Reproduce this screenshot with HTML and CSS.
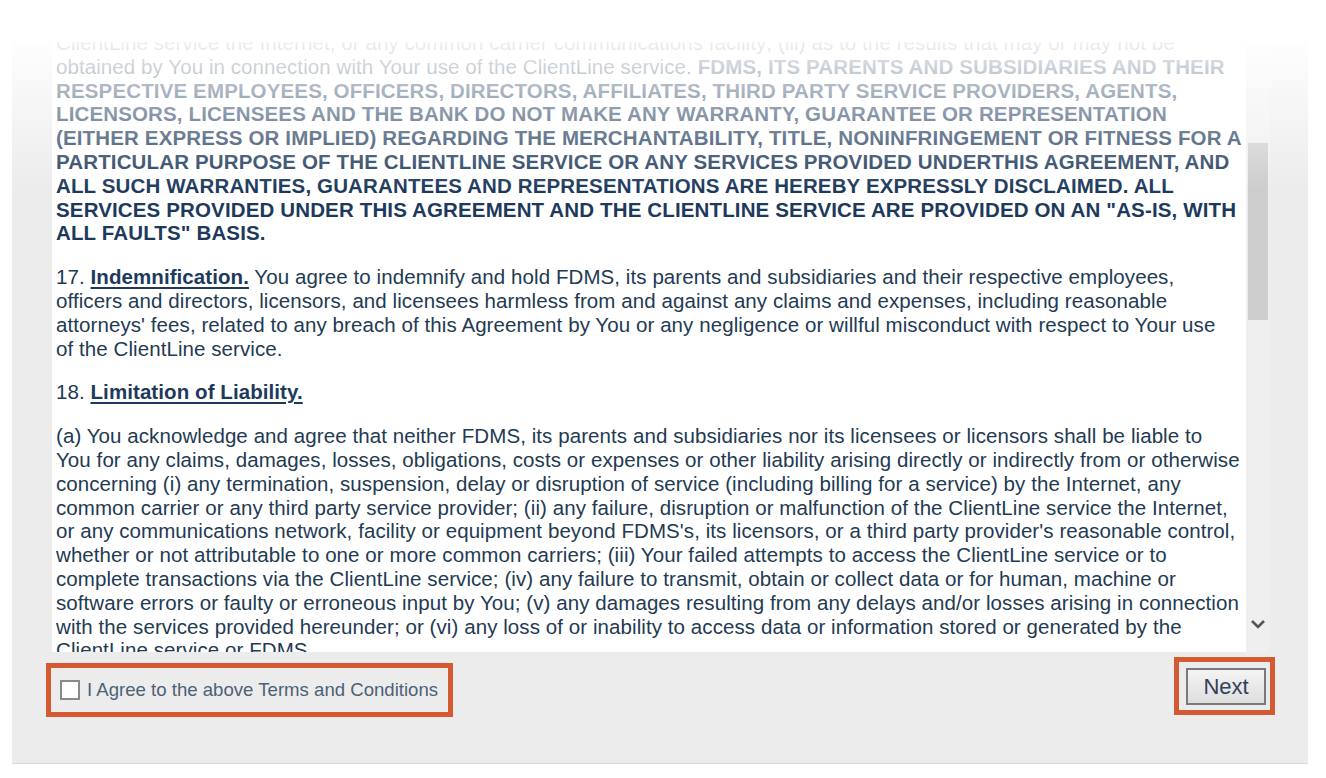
FILE: index.html
```html
<!DOCTYPE html>
<html lang="en">
<head>
    <meta charset="UTF-8">
    <meta name="viewport" content="width=device-width, initial-scale=1.0">
    <title>ClientLine Terms and Conditions</title>
    <link rel="stylesheet" href="styles.css">
</head>
<body>
    <div class="panel">
        <div class="terms-row">
            <div class="terms">
                <div class="terms-text">
                    <p>ClientLine service the Internet, or any common carrier communications facility; (iii) as to the results that may or may not be<br>
                    obtained by You in connection with Your use of the ClientLine service. <b>FDMS, ITS PARENTS AND SUBSIDIARIES AND THEIR<br>
                    RESPECTIVE EMPLOYEES, OFFICERS, DIRECTORS, AFFILIATES, THIRD PARTY SERVICE PROVIDERS, AGENTS,<br>
                    LICENSORS, LICENSEES AND THE BANK DO NOT MAKE ANY WARRANTY, GUARANTEE OR REPRESENTATION<br>
                    (EITHER EXPRESS OR IMPLIED) REGARDING THE MERCHANTABILITY, TITLE, NONINFRINGEMENT OR FITNESS FOR A<br>
                    PARTICULAR PURPOSE OF THE CLIENTLINE SERVICE OR ANY SERVICES PROVIDED UNDERTHIS AGREEMENT, AND<br>
                    ALL SUCH WARRANTIES, GUARANTEES AND REPRESENTATIONS ARE HEREBY EXPRESSLY DISCLAIMED. ALL<br>
                    SERVICES PROVIDED UNDER THIS AGREEMENT AND THE CLIENTLINE SERVICE ARE PROVIDED ON AN "AS-IS, WITH<br>
                    ALL FAULTS" BASIS.</b></p>

                    <p>17. <span class="section-title">Indemnification.</span> You agree to indemnify and hold FDMS, its parents and subsidiaries and their respective employees,<br>
                    officers and directors, licensors, and licensees harmless from and against any claims and expenses, including reasonable<br>
                    attorneys' fees, related to any breach of this Agreement by You or any negligence or willful misconduct with respect to Your use<br>
                    of the ClientLine service.</p>

                    <p>18. <span class="section-title">Limitation of Liability.</span></p>

                    <p>(a) You acknowledge and agree that neither FDMS, its parents and subsidiaries nor its licensees or licensors shall be liable to<br>
                    You for any claims, damages, losses, obligations, costs or expenses or other liability arising directly or indirectly from or otherwise<br>
                    concerning (i) any termination, suspension, delay or disruption of service (including billing for a service) by the Internet, any<br>
                    common carrier or any third party service provider; (ii) any failure, disruption or malfunction of the ClientLine service the Internet,<br>
                    or any communications network, facility or equipment beyond FDMS's, its licensors, or a third party provider's reasonable control,<br>
                    whether or not attributable to one or more common carriers; (iii) Your failed attempts to access the ClientLine service or to<br>
                    complete transactions via the ClientLine service; (iv) any failure to transmit, obtain or collect data or for human, machine or<br>
                    software errors or faulty or erroneous input by You; (v) any damages resulting from any delays and/or losses arising in connection<br>
                    with the services provided hereunder; or (vi) any loss of or inability to access data or information stored or generated by the<br>
                    ClientLine service or FDMS.</p>
                </div>
            </div>
            <div class="scrollbar">
                <div class="scroll-thumb"></div>
                <svg class="scroll-arrow" width="16" height="12" viewBox="0 0 16 12">
                    <path d="M2 3 L8 9 L14 3" fill="none" stroke="#555" stroke-width="2.6"/>
                </svg>
            </div>
        </div>

        <div class="footer">
            <label class="agree highlight">
                <span class="checkbox"></span>
                I Agree to the above Terms and Conditions
            </label>
            <div class="next-wrap highlight">
                <button class="next-btn">Next</button>
            </div>
        </div>
    </div>

    <!-- white fade over the top of the terms -->
    <div class="fade"></div>
</body>
</html>
```

FILE: styles.css
```css
body {
    margin: 0;
    background-color: white;
    font-family: "Liberation Sans", Arial, sans-serif;
}
.panel {
    width: 1296px;
    height: 721px;
    margin: 42px 0 0 12px;
    background-color: #ececec;
    border-bottom: 1px solid #d9d9d9;
}
.terms-row {
    display: flex;
    padding-left: 40px;
    height: 610px;
}
.terms {
    width: 1190px;
    padding-left: 4px;
    background-color: white;
    overflow: hidden;
}
.terms-text {
    margin-top: -11px;
    font-size: 20.5px;
    line-height: 23.8px;
    letter-spacing: 0.08px;
    white-space: nowrap;
    color: #233a52;
}
.terms-text p {
    margin: 0 0 20px 0;
}
.terms-text b {
    color: #1d3a5c;
    letter-spacing: 0.14px;
}
.section-title {
    font-weight: bold;
    color: #1d3a5c;
    text-decoration: underline;
    text-decoration-thickness: 2px;
    text-underline-offset: 3px;
}
.scrollbar {
    width: 24px;
    background-color: #efefef;
    display: flex;
    flex-direction: column;
    align-items: center;
}
.scroll-thumb {
    width: 20px;
    height: 177px;
    margin-top: 101px;
    background-color: #cdcdcd;
}
.scroll-arrow {
    margin-top: auto;
    margin-bottom: 22px;
}
.footer {
    display: flex;
    justify-content: space-between;
    align-items: flex-start;
    padding: 5px 33px 0 34px;
}
.highlight {
    border: 5px solid #d65a31;
}
.agree {
    margin-top: 6px;
    display: flex;
    align-items: center;
    gap: 7px;
    padding: 11px 10px 11px 9px;
    font-size: 18.6px;
    color: #4c6177;
}
.checkbox {
    width: 16px;
    height: 16px;
    border: 2px solid #8a8a8a;
    background-color: white;
}
.next-wrap {
    padding: 6px 4px 5px 7px;
    background-color: #ececec;
}
.next-btn {
    width: 80px;
    height: 37px;
    border: 2px solid #7a7a7a;
    background: linear-gradient(#f4f4f4, #dedede);
    font-family: "Liberation Sans", Arial, sans-serif;
    font-size: 22px;
    color: #33405a;
}
.fade {
    position: absolute;
    top: 0;
    left: 0;
    right: 0;
    height: 190px;
    background: linear-gradient(white 16%, rgba(255,255,255,0));
    pointer-events: none;
}
```
